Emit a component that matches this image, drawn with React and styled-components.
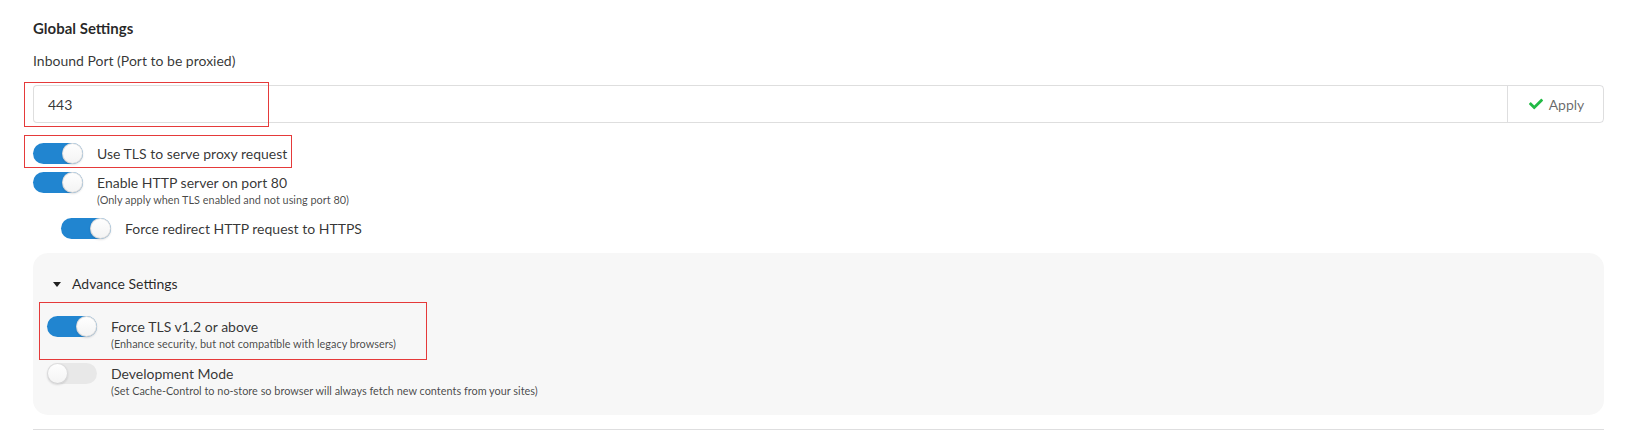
import React from "react";
import styled, { createGlobalStyle } from "styled-components";
import { FaCheck } from "react-icons/fa";

const Global = createGlobalStyle`
  html, body { margin: 0; padding: 0; background: #ffffff; }
  body {
    font-family: Lato, "Helvetica Neue", Arial, sans-serif;
    font-size: 14px;
    color: rgba(0, 0, 0, 0.87);
  }
  * { box-sizing: border-box; }
`;

const Page = styled.div`
  padding: 18px 32px 0 33px;
  width: 1636px;
`;

const Title = styled.div`
  font-weight: 700;
  font-size: 15px;
  line-height: 20px;
  color: rgba(0, 0, 0, 0.85);
`;

const FieldLabel = styled.div`
  margin-top: 13px;
  font-size: 14px;
  line-height: 20px;
  color: rgba(0, 0, 0, 0.8);
`;

const Annotated = styled.div`
  position: relative;
  margin-top: ${(p) => p.$mt || 0}px;
  margin-left: ${(p) => p.$ml || 0}px;
`;

const RedBox = styled.div`
  position: absolute;
  left: ${(p) => p.$l}px;
  top: ${(p) => p.$t}px;
  width: ${(p) => p.$w}px;
  height: ${(p) => p.$h}px;
  border: 1px solid #e53a3a;
  pointer-events: none;
`;

const ActionInput = styled.div`
  display: flex;
  height: 38px;
`;

const TextInput = styled.div`
  flex: 1;
  display: flex;
  align-items: center;
  padding: 0 14px;
  border: 1px solid rgba(34, 36, 38, 0.15);
  border-right: none;
  border-radius: 4px 0 0 4px;
  font-size: 14px;
  color: rgba(0, 0, 0, 0.8);
`;

const ApplyButton = styled.div`
  flex: none;
  width: 97px;
  display: flex;
  align-items: center;
  justify-content: center;
  gap: 6px;
  border: 1px solid rgba(34, 36, 38, 0.15);
  border-radius: 0 4px 4px 0;
  color: rgba(0, 0, 0, 0.6);
  font-size: 14px;
  padding-left: 2px;
  svg { color: #21ba45; width: 14px; height: 14px; }
`;

const Row = styled.div`
  display: flex;
  align-items: flex-start;
`;

const Track = styled.div`
  flex: none;
  width: 50px;
  height: 21px;
  border-radius: 11px;
  display: flex;
  justify-content: ${(p) => (p.$on ? "flex-end" : "flex-start")};
  background: ${(p) => (p.$on ? "#2185d0" : "rgba(0,0,0,0.06)")};
`;

const Knob = styled.div`
  width: 21px;
  height: 21px;
  border-radius: 50%;
  background: linear-gradient(#ffffff, #f3f3f3);
  box-shadow: 0 1px 2px 0 rgba(34, 36, 38, 0.15),
    0 0 0 1px rgba(34, 36, 38, 0.15) inset;
`;

const RowText = styled.div`
  margin-left: 14px;
  padding-top: 1px;
`;

const Main = styled.div`
  font-size: 14px;
  line-height: 20px;
  color: rgba(0, 0, 0, 0.8);
`;

const Sub = styled.div`
  font-size: 10.9px;
  line-height: 14px;
  color: rgba(0, 0, 0, 0.72);
`;

const Card = styled.div`
  margin-top: 14px;
  background: #f7f7f7;
  border-radius: 15px;
  padding: 21px 14px 17px 14px;
`;

const AccordionTitle = styled.div`
  display: flex;
  align-items: center;
  font-size: 14px;
  line-height: 20px;
  color: rgba(0, 0, 0, 0.85);
  padding-left: 6px;
`;

const Caret = styled.svg`
  width: 8px;
  height: 5px;
  margin-right: 11px;
  margin-top: 1px;
`;

const Divider = styled.div`
  margin-top: 14px;
  height: 1px;
  background: rgba(34, 36, 38, 0.15);
`;

function Toggle({ on, main, sub }) {
  return (
    <Row>
      <Track $on={on}>
        <Knob />
      </Track>
      <RowText>
        <Main>{main}</Main>
        {sub && <Sub>{sub}</Sub>}
      </RowText>
    </Row>
  );
}

export default function App() {
  return (
    <>
      <Global />
      <Page>
        <Title>Global Settings</Title>
        <FieldLabel>Inbound Port (Port to be proxied)</FieldLabel>
        <Annotated $mt={14}>
          <ActionInput>
            <TextInput>443</TextInput>
            <ApplyButton>
              <FaCheck />
              Apply
            </ApplyButton>
          </ActionInput>
          <RedBox $l={-9} $t={-3} $w={245} $h={45} />
        </Annotated>
        <Annotated $mt={20}>
          <Toggle on main="Use TLS to serve proxy request" />
          <RedBox $l={-9} $t={-8} $w={268} $h={33} />
        </Annotated>
        <Annotated $mt={8}>
          <Toggle
            on
            main="Enable HTTP server on port 80"
            sub="(Only apply when TLS enabled and not using port 80)"
          />
        </Annotated>
        <Annotated $mt={11} $ml={28}>
          <Toggle on main="Force redirect HTTP request to HTTPS" />
        </Annotated>
        <Card>
          <AccordionTitle>
            <Caret viewBox="0 0 8 5">
              <path d="M0 0 L8 0 L4 5 Z" fill="rgba(0,0,0,0.87)" />
            </Caret>
            Advance Settings
          </AccordionTitle>
          <Annotated $mt={22}>
            <Toggle
              on
              main="Force TLS v1.2 or above"
              sub="(Enhance security, but not compatible with legacy browsers)"
            />
            <RedBox $l={-8} $t={-14} $w={388} $h={58} />
          </Annotated>
          <Annotated $mt={12}>
            <Toggle
              main="Development Mode"
              sub="(Set Cache-Control to no-store so browser will always fetch new contents from your sites)"
            />
          </Annotated>
        </Card>
        <Divider />
      </Page>
    </>
  );
}
